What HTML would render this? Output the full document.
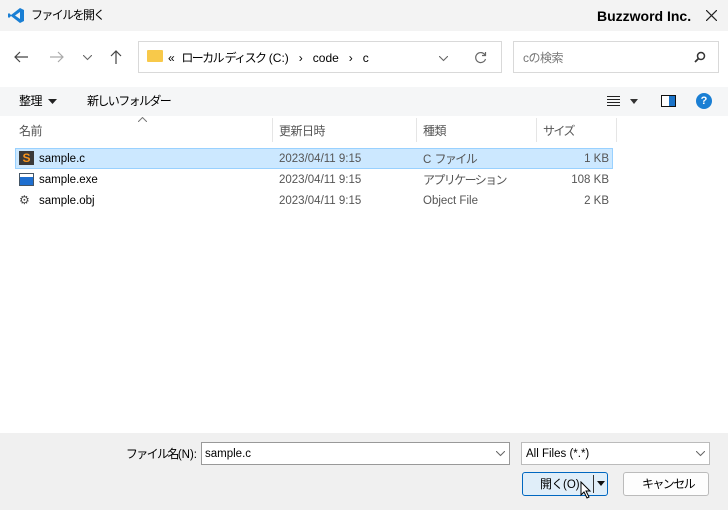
<!DOCTYPE html><html><head><meta charset="utf-8"><style>
body{margin:0;width:728px;height:510px;position:relative;overflow:hidden;background:#fff;font-family:"Liberation Sans","Noto Sans CJK JP",sans-serif;font-size:11.5px;line-height:14px;color:#000}
.a{position:absolute;white-space:nowrap}
.g{color:#555}
.j{font-size:12px;letter-spacing:-1.6px}
.k{font-size:12px;letter-spacing:-0.5px}
.n{letter-spacing:0}
</style></head><body>
<div class="a" style="left:0;top:0;width:728px;height:31px;background:#f3f3f3"></div>
<svg class="a" style="left:8px;top:7px" width="17" height="17" viewBox="0 0 17 17"><path d="M12 1L16 3V14L12 16L3 9L1 11L0 10V7L1 6L3 8ZM12 5L7 8.5L12 12Z" fill="#1a7fd4"/></svg>
<div class="a j" style="left:31px;top:8px">ファイルを開く</div>
<div class="a" style="left:597px;top:9px;font-size:14px;font-weight:bold">Buzzword Inc.</div>
<svg class="a" style="left:706px;top:10px" width="11" height="11"><path d="M0 0L11 11M11 0L0 11" stroke="#222" stroke-width="1.2"/></svg>
<svg class="a" style="left:14px;top:51px" width="14" height="12"><path d="M14 6H1M6 1L1 6L6 11" fill="none" stroke="#444" stroke-width="1.2"/></svg>
<svg class="a" style="left:50px;top:51px" width="14" height="12"><path d="M0 6H13M8 1L13 6L8 11" fill="none" stroke="#aaa" stroke-width="1.2"/></svg>
<svg class="a" style="left:83px;top:55px" width="9" height="6"><path d="M0 0L4.5 4.5L9 0" fill="none" stroke="#666" stroke-width="1.1"/></svg>
<svg class="a" style="left:110px;top:50px" width="12" height="14"><path d="M6 14V1M1 6L6 1L11 6" fill="none" stroke="#444" stroke-width="1.2"/></svg>
<div class="a" style="left:138px;top:41px;width:364px;height:32px;border:1px solid #d9d9d9;box-sizing:border-box"></div>
<div class="a" style="left:147px;top:50px;width:16px;height:12px;background:#f8c94a;border-radius:1px"></div>
<div class="a" style="left:168px;top:51px;font-size:12px">«&nbsp;&nbsp;<span class="j">ローカル ディスク</span> (C:)&nbsp;&nbsp; ›&nbsp;&nbsp; code&nbsp;&nbsp; ›&nbsp;&nbsp; c</div>
<svg class="a" style="left:439px;top:56px" width="9" height="6"><path d="M0 0L4.5 4.5L9 0" fill="none" stroke="#666" stroke-width="1.1"/></svg>
<svg class="a" style="left:474px;top:51px" width="13" height="13"><path d="M11 4A5 5 0 1 0 11.5 8" fill="none" stroke="#666" stroke-width="1.2"/><path d="M11.5 1V4.5H8" fill="none" stroke="#666" stroke-width="1.2"/></svg>
<div class="a" style="left:513px;top:41px;width:206px;height:32px;border:1px solid #d9d9d9;box-sizing:border-box"></div>
<div class="a k" style="left:523px;top:51px;color:#777">cの検索</div>
<svg class="a" style="left:694px;top:51px" width="12" height="12"><circle cx="7" cy="5" r="3.5" fill="none" stroke="#333" stroke-width="1.5"/><path d="M4.5 7.5L1 11" stroke="#333" stroke-width="1.8"/></svg>
<div class="a" style="left:0;top:87px;width:728px;height:29px;background:#f5f6f7"></div>
<div class="a k" style="left:19px;top:94px">整理 <svg width="9" height="6" style="margin-left:3px"><path d="M0 0H9L4.5 5Z" fill="#222"/></svg></div>
<div class="a j" style="left:87px;top:94px">新しいフォルダー</div>
<svg class="a" style="left:607px;top:96px" width="13" height="10"><path d="M0 .5H13M0 3.5H13M0 6.5H13M0 9.5H13" stroke="#222"/></svg>
<svg class="a" style="left:630px;top:99px" width="8" height="5"><path d="M0 0H8L4 5Z" fill="#333"/></svg>
<div class="a" style="left:661px;top:95px;width:13px;height:10px;border:1.5px solid #111;background:linear-gradient(90deg,#fff 55%,#1a73c8 55%)"></div>
<div class="a" style="left:696px;top:93px;width:16px;height:16px;border-radius:50%;background:#1a7fd4;color:#fff;font-size:11px;font-weight:bold;text-align:center;line-height:16px">?</div>
<svg class="a" style="left:138px;top:117px" width="9" height="5"><path d="M0 5L4.5 0.5L9 5" fill="none" stroke="#777"/></svg>
<div class="a k" style="left:19px;top:124px;color:#555">名前</div>
<div class="a" style="left:272px;top:118px;width:1px;height:24px;background:#e5e5e5"></div>
<div class="a k" style="left:279px;top:124px;color:#555">更新日時</div>
<div class="a" style="left:416px;top:118px;width:1px;height:24px;background:#e5e5e5"></div>
<div class="a k" style="left:423px;top:124px;color:#555">種類</div>
<div class="a" style="left:536px;top:118px;width:1px;height:24px;background:#e5e5e5"></div>
<div class="a j" style="left:543px;top:124px;color:#555">サイズ</div>
<div class="a" style="left:616px;top:118px;width:1px;height:24px;background:#e5e5e5"></div>
<div class="a" style="left:15px;top:148px;width:598px;height:21px;background:#cce8ff;border:1px solid #99d1ff;box-sizing:border-box"></div>
<div class="a" style="left:19px;top:151px;width:15px;height:14px;background:#3a3a3a;color:#f7941d;font-weight:bold;font-size:12px;line-height:14px;text-align:center">S</div>
<div class="a" style="left:19px;top:173px;width:13px;height:11px;border:1px solid #456;background:linear-gradient(#fff 25%,#1e6fd0 25%)"></div>
<div class="a" style="left:19px;top:193px;font-size:12px;color:#444">⚙</div>
<div class="a" style="left:39px;top:152px">sample.c</div>
<div class="a" style="left:39px;top:173px">sample.exe</div>
<div class="a" style="left:39px;top:194px">sample.obj</div>
<div class="a g" style="left:279px;top:152px">2023/04/11 9:15</div>
<div class="a g" style="left:279px;top:173px">2023/04/11 9:15</div>
<div class="a g" style="left:279px;top:194px">2023/04/11 9:15</div>
<div class="a g" style="left:423px;top:152px">C <span class="j">ファイル</span></div>
<div class="a g j" style="left:423px;top:173px">アプリケーション</div>
<div class="a g" style="left:423px;top:194px">Object File</div>
<div class="a g" style="left:540px;top:152px;width:69px;text-align:right">1 KB</div>
<div class="a g" style="left:540px;top:173px;width:69px;text-align:right">108 KB</div>
<div class="a g" style="left:540px;top:194px;width:69px;text-align:right">2 KB</div>
<div class="a" style="left:0;top:433px;width:728px;height:77px;background:#f0f0f0"></div>
<div class="a" style="left:100px;width:97px;text-align:right;top:447px"><span class="j">ファイル名</span>(N):</div>
<div class="a" style="left:201px;top:442px;width:309px;height:23px;border:1px solid #999;background:#fff;box-sizing:border-box"></div>
<div class="a" style="left:205px;top:447px">sample.c</div>
<svg class="a" style="left:496px;top:451px" width="9" height="6"><path d="M0 0L4.5 4.5L9 0" fill="none" stroke="#666"/></svg>
<div class="a" style="left:521px;top:442px;width:189px;height:23px;border:1px solid #bbb;background:#fff;box-sizing:border-box"></div>
<div class="a" style="left:526px;top:447px">All Files (*.*)</div>
<svg class="a" style="left:696px;top:451px" width="9" height="6"><path d="M0 0L4.5 4.5L9 0" fill="none" stroke="#666"/></svg>
<div class="a" style="left:522px;top:472px;width:86px;height:24px;border:1px solid #0067c0;border-radius:3px;background:#e0eef9;box-sizing:border-box"></div>
<div class="a" style="left:540px;top:477px"><span class="k">開く</span>(O)</div>
<div class="a" style="left:593px;top:475px;width:1px;height:18px;background:#333"></div>
<svg class="a" style="left:597px;top:481px" width="8" height="5"><path d="M0 0H8L4 5Z" fill="#111"/></svg>
<svg class="a" style="left:580px;top:481px" width="12" height="18"><path d="M1 1V14L4 11L7 17L9 16L6 10H10Z" fill="#fff" stroke="#000"/></svg>
<div class="a" style="left:623px;top:472px;width:86px;height:24px;border:1px solid #bbb;border-radius:3px;background:#fdfdfd;box-sizing:border-box"></div>
<div class="a j" style="left:642px;top:477px">キャンセル</div>
</body></html>
